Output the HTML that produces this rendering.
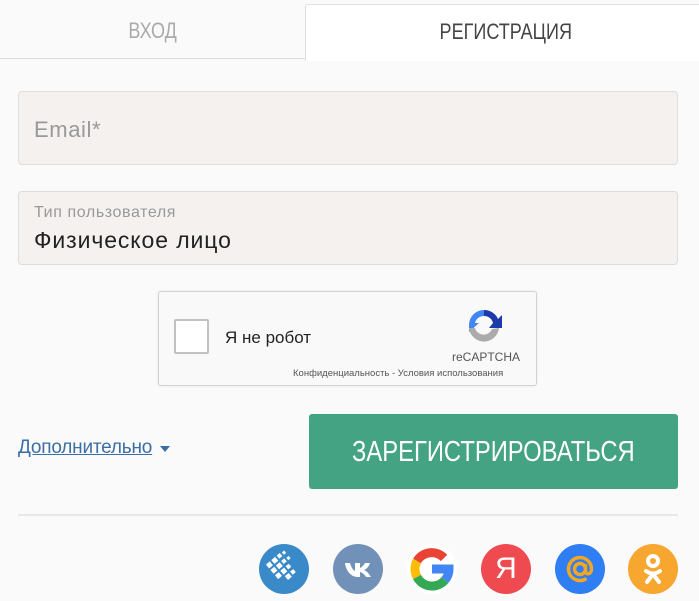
<!DOCTYPE html>
<html><head><meta charset="utf-8"><style>
body{margin:0;width:699px;height:601px;background:#fafafa;font-family:"Liberation Sans",sans-serif;position:relative;overflow:hidden}
.abs{position:absolute}
.cond{display:inline-block;transform:scaleX(.82);transform-origin:center;white-space:nowrap}
.tab1{left:0;top:0;width:305px;height:58px;border-bottom:1px solid #ddd;text-align:center;line-height:62px;font-size:22px;color:#aaa}
.tab2{left:305px;top:4px;width:400px;height:56px;background:#fff;border-left:1px solid #ddd;border-top:1px solid #e2e2e2;border-radius:3px 0 0 0;text-align:center;line-height:54px;font-size:22px;color:#444}
.inp{left:18px;width:658px;height:72px;background:#f4f1ee;border:1px solid #ddd;border-radius:4px}
.cap{left:158px;top:291px;width:377px;height:93px;background:#f9f9f9;border:1px solid #d3d3d3;border-radius:3px;box-shadow:0 0 3px rgba(0,0,0,.08)}
.btn{left:309px;top:414px;width:369px;height:75px;background:#43a382;border-radius:3px;color:#fff;font-size:29px;text-align:center;line-height:76px}
.ic{width:50px;height:50px;border-radius:50%;top:544px}
</style></head><body>
<div class="abs tab1"><span class="cond">ВХОД</span></div>
<div class="abs tab2"><span class="cond">РЕГИСТРАЦИЯ</span></div>

<div class="abs inp" style="top:91px"><div class="abs" style="left:15px;top:25px;font-size:22px;letter-spacing:.6px;color:#999">Email*</div></div>
<div class="abs inp" style="top:191px"><div class="abs" style="left:15px;top:12px;font-size:16px;letter-spacing:.6px;color:#999;white-space:nowrap">Тип пользователя</div><div class="abs" style="left:15px;top:35px;font-size:23px;letter-spacing:.9px;color:#222;white-space:nowrap">Физическое лицо</div></div>

<div class="abs cap">
<div class="abs" style="left:15px;top:27px;width:31px;height:31px;border:2px solid #c1c1c1;border-radius:2px;background:#fff"></div>
<div class="abs" style="left:66px;top:36px;font-size:17px;color:#222;white-space:nowrap">Я не робот</div>
<svg class="abs" style="left:306px;top:14px" width="38" height="38" viewBox="0 0 38 38">
<path d="M19 4 A15 15 0 0 1 33 13 L37 9 L37 22 L24 22 L28 17 A9 9 0 0 0 19 10Z" fill="#1c3aa9"/>
<path d="M4 19 A15 15 0 0 1 19 4 L19 10 A9 9 0 0 0 10 17 L14 17 L4 26Z" fill="#4285f4"/>
<path d="M34 19 A15 15 0 0 1 4 22 L10 22 A9 9 0 0 0 27 23 L34 22Z" fill="#ababab"/>
</svg>
<div class="abs" style="left:293px;top:58px;font-size:12px;color:#555">reCAPTCHA</div>
<div class="abs" style="left:134px;top:76px;font-size:9.5px;color:#555;white-space:nowrap">Конфиденциальность - Условия использования</div>
</div>

<div class="abs" style="left:18px;top:437px;font-size:19px;letter-spacing:-.2px;color:#3a6ea5;text-decoration:underline;white-space:nowrap">Дополнительно</div>
<div class="abs" style="left:160px;top:446px;width:0;height:0;border-left:5px solid transparent;border-right:5px solid transparent;border-top:6px solid #3a6ea5"></div>
<div class="abs btn"><span class="cond">ЗАРЕГИСТРИРОВАТЬСЯ</span></div>
<div class="abs" style="left:18px;top:514px;width:660px;height:2px;background:#e8e8e8"></div>

<div class="abs ic" style="left:259px;background:#3a89c9;overflow:hidden">
<svg width="50" height="50" viewBox="0 0 50 50"><g fill="#fff" transform="rotate(-40 25 25)">
<rect x="14" y="10" width="5" height="5"/><rect x="21" y="10" width="5" height="5"/><rect x="28" y="10" width="4" height="4"/><rect x="34" y="11" width="3" height="3"/>
<rect x="14" y="17" width="5" height="5"/><rect x="21" y="17" width="5" height="5"/><rect x="28" y="17" width="4" height="4"/><rect x="34" y="18" width="3" height="3"/>
<rect x="14" y="24" width="5" height="5"/><rect x="21" y="24" width="5" height="5"/><rect x="28" y="24" width="4" height="4"/>
<rect x="21" y="31" width="5" height="5"/><rect x="28" y="31" width="4" height="4"/></g></svg></div>
<div class="abs ic" style="left:333px;background:#7191b8">
<svg width="50" height="50" viewBox="0 0 50 50"><path d="M12 19h5c1 4 3 7 5 8v-8h5v5c2-1 4-3 5-5h5c-1 3-3 6-6 7 3 1 5 4 7 7h-5c-1-2-3-4-6-5v5h-2c-7 0-12-6-13-14z" fill="#fff"/></svg></div>
<div class="abs ic" style="left:407px;background:#fff">
<svg width="50" height="50" viewBox="0 0 50 50" fill="none" stroke-width="9">
<path d="M37 14 A17 17 0 0 0 10 17" stroke="#ea4335"/>
<path d="M10 17 A17 17 0 0 0 10 33" stroke="#fbbc05"/>
<path d="M10 33 A17 17 0 0 0 38 36" stroke="#34a853"/>
<path d="M38 36 A17 17 0 0 0 42 25 L25 25" stroke="#4285f4"/></svg></div>
<div class="abs ic" style="left:481px;background:#ef4a4f;color:#fff;font-size:30px;text-align:center;line-height:50px">Я</div>
<div class="abs ic" style="left:555px;background:#2f7ef3">
<svg width="50" height="50" viewBox="0 0 50 50" fill="none" stroke="#f5a623" stroke-width="3.5"><circle cx="25" cy="25" r="5.5"/><path d="M30.5 20v7c0 4 6 4 6-2a11.5 11.5 0 1 0-5 9.5"/></svg></div>
<div class="abs ic" style="left:628px;background:#f7a630">
<svg width="50" height="50" viewBox="0 0 50 50" fill="none" stroke="#fff" stroke-width="4" stroke-linecap="round"><circle cx="25" cy="17" r="5"/><path d="M18 27q7 5 14 0M25 30l-6 8M25 30l6 8"/></svg></div>
</body></html>
